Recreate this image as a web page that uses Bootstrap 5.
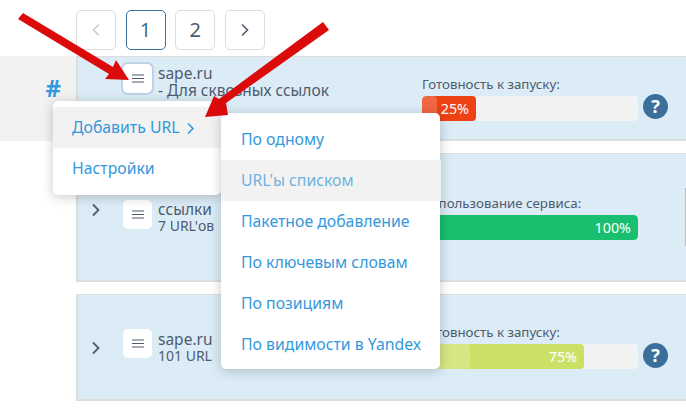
<!DOCTYPE html>
<html lang="ru">
<head>
<meta charset="UTF-8">
<title>Проекты</title>
<link href="https://cdn.jsdelivr.net/npm/bootstrap@5.3.0/dist/css/bootstrap.min.css" rel="stylesheet">
<style>
body { font-family: "Noto Sans", "Liberation Sans", sans-serif; color: #4f5b6e; font-size: 14px; line-height: 16px; overflow: hidden; width: 686px; height: 413px; position: relative; }
.pager-row { height: 56px; padding: 10px 0 0 76px; gap: 9.600px; }
.pager-btn { width: 40px; height: 40px; border: 1px solid #ddd; border-radius: 5px; font-size: 20px; color: #4f5b6e; }
.pager-btn.is-current { border-color: #3b6f9b; color: #3b6f9b; }
.side-col { width: 76px; flex: none; }
.side-head { height: 85px; background: #f2f2f2; padding: 24px 15px 0 0; color: #3498db; font-size: 24px; font-weight: 700; text-align: right; }
.rows-col { flex: 1; gap: 12px; min-width: 0; }
.site-row { background: #dbecf7; border: 2px solid #ddd; border-width: 1px 0 2px 2px; padding-left: 13px; }
.row-one { height: 85px; }
.row-two { height: 129px; }
.row-three { height: 107px; }
.row-four { height: 20px; background: #fff; }
.chevron-cell { width: 32px; flex: none; }
.burger { width: 29px; height: 29px; background: #fff; border-radius: 5px; flex: none; }
.burger.is-focus { box-shadow: 0 0 0 2px #bdd3e6; }
.row-title { margin-left: 6px; width: 264px; flex: none; white-space: nowrap; font-size: 15.500px; }
.row-sub { font-size: 14px; }
.bar-box { width: 216px; flex: none; white-space: nowrap; font-size: 13.300px; }
.bar-label { margin-bottom: 4px; }
.bar-track { height: 25px; background: #f2f2f2; border-radius: 4px; overflow: hidden; }
.bar-fill { height: 25px; color: #fff; border-radius: 4px; position: relative; font-size: 14.300px; line-height: 25px; text-align: right; padding-right: 7px; }
.bar-fill span { position: relative; }
.bar-glow { position: absolute; left: 0; top: 0; bottom: 0; background: rgba(255,255,255,.2); border-radius: 4px; }
.help-mark { width: 25px; height: 25px; border-radius: 50%; background: #3b6f9b; color: #fff; font-weight: 700; font-size: 18px; line-height: 25px; text-align: center; margin-left: 5px; flex: none; }
.row-one .burger { margin-top: 7px; }
.row-one .row-title { margin-top: 8px; line-height: 17px; }
.row-one .bar-box { margin-top: 19px; }
.row-one .help-mark { margin-top: 37px; }
.row-two .chevron-cell { margin-top: 47px; }
.row-two .burger { margin-top: 46px; }
.row-two .row-title { margin-top: 47px; }
.row-two .bar-box { margin-top: 41px; }
.row-three .chevron-cell { margin-top: 44px; }
.row-three .burger { margin-top: 34px; }
.row-three .row-title { margin-top: 36px; }
.row-three .bar-box { margin-top: 29px; }
.row-three .help-mark { margin-top: 48px; }
.pop-menu { position: absolute; background: #fff; border-radius: 5px; box-shadow: 0 2px 12px rgba(0,0,0,.22); padding: 6px 0; z-index: 5; font-size: 15.800px; }
.pop-menu a { display: block; height: 41px; line-height: 41px; padding-left: 20px; color: #3498db; text-decoration: none; white-space: nowrap; }
.pop-first { left: 53px; top: 101px; width: 168px; height: 94px; }
.pop-first a { padding-left: 19px; }
.pop-first svg { margin-left: 2px; }
.pop-second { left: 221px; top: 113px; width: 219px; height: 256px; z-index: 6; }
.pop-menu a.is-hover { background: #f2f2f2; }
.pop-second a.is-hover { color: #6fb3e0; margin-right: -1px; }
.arrow-layer { position: absolute; left: 0; top: 0; z-index: 9; }
.scroll-thumb { position: absolute; right: 0; top: 188px; width: 1px; height: 58px; background: #bbb; }
</style>
</head>
<body>
<div class="d-flex pager-row">
  <div class="pager-btn d-flex align-items-center justify-content-center"><svg width="10" height="14" viewBox="0 0 10 14"><path d="M8 1.500 2.500 7 8 12.500" fill="none" stroke="#c5ccd3" stroke-width="1.600"/></svg></div>
  <div class="pager-btn is-current d-flex align-items-center justify-content-center">1</div>
  <div class="pager-btn d-flex align-items-center justify-content-center">2</div>
  <div class="pager-btn d-flex align-items-center justify-content-center"><svg width="10" height="14" viewBox="0 0 10 14"><path d="M2 1.500 7.500 7 2 12.500" fill="none" stroke="#4f5b6e" stroke-width="1.600"/></svg></div>
</div>
<div class="d-flex">
  <div class="side-col"><div class="side-head">#</div></div>
  <div class="rows-col d-flex flex-column">
    <div class="site-row row-one d-flex align-items-start">
      <div class="chevron-cell"></div>
      <div class="burger is-focus d-flex align-items-center justify-content-center"><svg width="12" height="9" viewBox="0 0 12 9"><path d="M0 1h12M0 4.500h12M0 8h12" stroke="#4f5b6e" stroke-width="1"/></svg></div>
      <div class="row-title">sape.ru<br>- Для сквозных ссылок</div>
      <div class="bar-box">
        <div class="bar-label">Готовность к запуску:</div>
        <div class="bar-track"><div class="bar-fill" style="width:25%;background:#ee4214"><div class="bar-glow" style="width:15px"></div><span>25%</span></div></div>
      </div>
      <div class="help-mark">?</div>
    </div>
    <div class="site-row row-two d-flex align-items-start">
      <div class="chevron-cell"><svg width="10" height="14" viewBox="0 0 10 14"><path d="M2 1.500 7.500 7 2 12.500" fill="none" stroke="#4f5b6e" stroke-width="1.800"/></svg></div>
      <div class="burger d-flex align-items-center justify-content-center"><svg width="12" height="9" viewBox="0 0 12 9"><path d="M0 1h12M0 4.500h12M0 8h12" stroke="#4f5b6e" stroke-width="1"/></svg></div>
      <div class="row-title">ссылки<br><span class="row-sub">7 URL'ов</span></div>
      <div class="bar-box">
        <div class="bar-label">Использование сервиса:</div>
        <div class="bar-track"><div class="bar-fill" style="width:100%;background:#19bf6e"><span>100%</span></div></div>
      </div>
    </div>
    <div class="site-row row-three d-flex align-items-start">
      <div class="chevron-cell"><svg width="10" height="14" viewBox="0 0 10 14"><path d="M2 1.500 7.500 7 2 12.500" fill="none" stroke="#4f5b6e" stroke-width="1.800"/></svg></div>
      <div class="burger d-flex align-items-center justify-content-center"><svg width="12" height="9" viewBox="0 0 12 9"><path d="M0 1h12M0 4.500h12M0 8h12" stroke="#4f5b6e" stroke-width="1"/></svg></div>
      <div class="row-title">sape.ru<br><span class="row-sub">101 URL</span></div>
      <div class="bar-box">
        <div class="bar-label">Готовность к запуску:</div>
        <div class="bar-track"><div class="bar-fill" style="width:75%;background:#cbe165"><div class="bar-glow" style="width:48px"></div><span>75%</span></div></div>
      </div>
      <div class="help-mark">?</div>
    </div>
    <div class="site-row row-four"></div>
  </div>
</div>
<div class="pop-menu pop-first">
  <a href="#" class="is-hover">Добавить URL <svg width="9" height="13" viewBox="0 0 9 13"><path d="M2 1.500 7 6.500 2 11.500" fill="none" stroke="#3498db" stroke-width="1.600"/></svg></a>
  <a href="#">Настройки</a>
</div>
<div class="pop-menu pop-second">
  <a href="#">По одному</a>
  <a href="#" class="is-hover">URL'ы списком</a>
  <a href="#">Пакетное добавление</a>
  <a href="#">По ключевым словам</a>
  <a href="#">По позициям</a>
  <a href="#">По видимости в Yandex</a>
</div>
<svg class="arrow-layer" width="686" height="413" viewBox="0 0 686 413">
  <path d="M23 13 113 67 116 60 129 80 105 79 109 74 18 19Z" fill="#dc0b0b"/>
  <path d="M323 22 329 30 226 103 228 115 205 117 214 96 219 99Z" fill="#dc0b0b"/>
</svg>
<div class="scroll-thumb"></div>
</body>
</html>
